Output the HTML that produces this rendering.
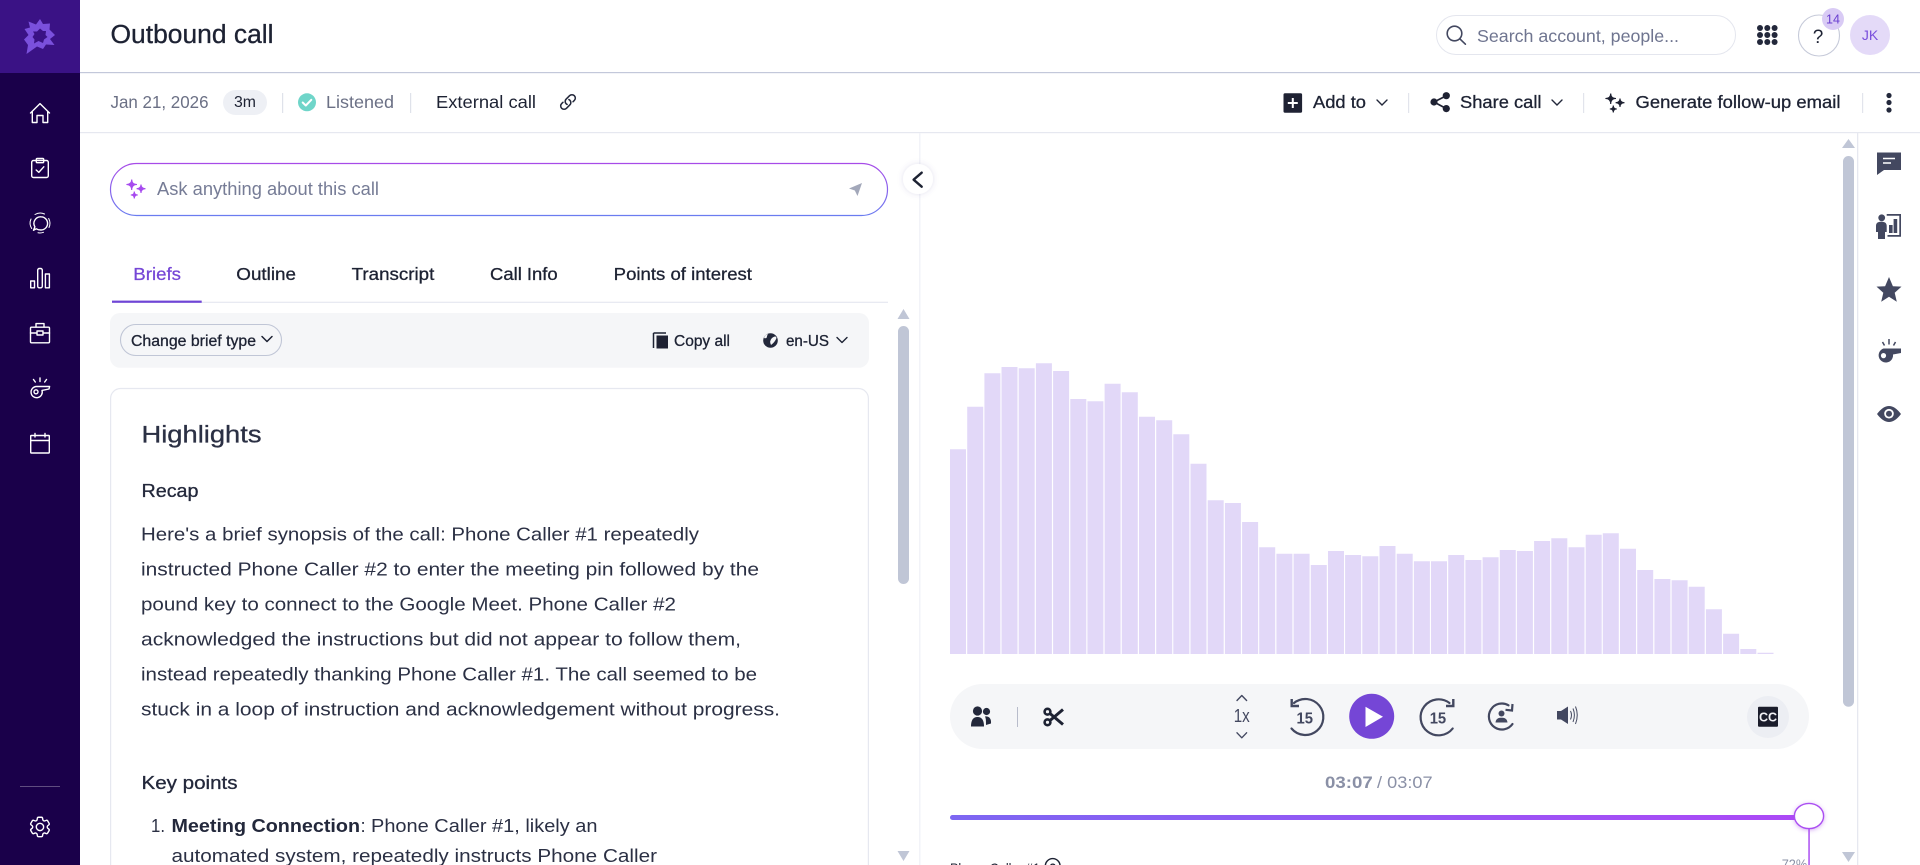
<!DOCTYPE html>
<html lang="en">
<head>
<meta charset="utf-8">
<title>Outbound call</title>
<style>
html,body{margin:0;padding:0;background:#fff;width:1920px;height:865px;overflow:hidden}
svg{display:block}
text{font-family:"Liberation Sans",sans-serif;white-space:pre}
.d{fill:#1d2233}
.dm{fill:#1d2233;stroke:#1d2233;stroke-width:.3}
.b{fill:#2b3044}
.bm{fill:#23283b;stroke:#23283b;stroke-width:.3}
.g{fill:#6b7085}
.ic{fill:none;stroke:#fff;stroke-width:1.4;stroke-linecap:round;stroke-linejoin:round}
.dk{fill:none;stroke:#434860;stroke-width:2.2;stroke-linecap:round;stroke-linejoin:round}
</style>
</head>
<body>
<svg xmlns="http://www.w3.org/2000/svg" width="1920" height="865" viewBox="0 0 1920 865">
<defs>
<linearGradient id="ask" gradientUnits="userSpaceOnUse" x1="0" y1="163" x2="0" y2="216"><stop offset="0" stop-color="#a84be8"/><stop offset="1" stop-color="#6a7cf0"/></linearGradient>
<linearGradient id="prog" gradientUnits="userSpaceOnUse" x1="950" y1="0" x2="1795" y2="0"><stop offset="0" stop-color="#7d66f2"/><stop offset="1" stop-color="#ac49f6"/></linearGradient>
<filter id="sh" x="-50%" y="-50%" width="200%" height="200%"><feDropShadow dx="0" dy="0" stdDeviation="3" flood-color="#5a50a0" flood-opacity=".18"/></filter>
<filter id="sh2" x="-50%" y="-50%" width="200%" height="200%"><feDropShadow dx="0" dy="1" stdDeviation="2" flood-color="#a84be8" flood-opacity=".45"/></filter>
</defs>
<rect width="1920" height="865" fill="#fff"/>

<!-- sidebar -->
<rect x="0" y="0" width="80" height="865" fill="#1a004a"/>
<rect x="0" y="0" width="80" height="73" fill="#3a1285"/>
<path fill="#7a50dc" fill-rule="evenodd" d="M40 19 L43 24 L50 23.5 L49.5 29.5 L55 35 L50 39 L54.5 45 L46 44.5 L43 49 L37 46.5 L26.5 54 L28 45 L24 39.5 L28.5 35 L24.5 29 L30 27.5 L28.5 21.5 L36 24.5 Z M40 28.5 L37 31.5 L33 31.5 L34.5 34 L32.5 37 L34.5 39.5 L34 43.5 L38.5 41 L43 43 L44 39.5 L47.5 37 L45.5 35 L46 31 L43 31 Z"/>

<g class="ic">
<path d="M30.5 113 L40 103.6 L49.5 113 M32.3 111.5 V122.5 H37 V115.5 H43 V122.5 H47.7 V111.5"/>
<rect x="31.7" y="160.5" width="16.6" height="17" rx="1.8"/>
<rect x="36.3" y="158.5" width="7.4" height="4.2" rx="1"/>
<path d="M36.2 170 L38.8 172.4 L43.8 166.8"/>
<g stroke-width="1"><path d="M35 214.5 A10 10 0 0 1 44.5 214 M48.7 218.5 A10 10 0 0 1 49 227.5 M43.5 232.3 A10 10 0 0 1 38 232.8 M31.7 228.5 A10 10 0 0 1 31 219"/></g>
<path d="M41 216.8 A6.6 6.6 0 0 1 41 230 C39 230 37.6 229.6 36.3 228.8 L33.5 230.3 L34.9 226.8 A6.6 6.6 0 0 1 41 216.8 Z"/>
<rect x="30.7" y="281" width="3.8" height="6.8"/><rect x="37.7" y="268.5" width="4.6" height="19.3" rx="1.6"/><rect x="45.4" y="274" width="4" height="13.8"/>
<rect x="30.5" y="327.2" width="19" height="15.6" rx="1"/><path d="M36 327 V323.6 H44 V327 M30.5 333 H37 M43 333 H49.5"/><rect x="37" y="331" width="6" height="4"/>
<path d="M36.5 386.5 H49.6 L49 389 L42 390.4 A5.6 5.6 0 1 1 36.5 386.5 Z"/><circle cx="36" cy="391.8" r="2"/><path d="M40 378 V381.5 M33.5 379.5 L35.3 382 M46.5 379.5 L44.7 382"/>
<rect x="30.7" y="435.5" width="18.6" height="17.5" rx=".5"/><path d="M30.7 440.5 H49.3 M35 433.5 V437 M45 433.5 V437"/>
<g transform="translate(27,814) scale(1.08)" stroke-width="1.3"><path d="M9.594 3.94c.09-.542.56-.94 1.11-.94h2.593c.55 0 1.02.398 1.11.94l.213 1.281c.063.374.313.686.645.87.074.04.147.083.22.127.325.196.72.257 1.075.124l1.217-.456a1.125 1.125 0 0 1 1.37.49l1.296 2.247a1.125 1.125 0 0 1-.26 1.431l-1.003.827c-.293.241-.438.613-.43.992a7.723 7.723 0 0 1 0 .255c-.008.378.137.75.43.991l1.004.827c.424.35.534.955.26 1.43l-1.298 2.247a1.125 1.125 0 0 1-1.369.491l-1.217-.456c-.355-.133-.75-.072-1.076.124a6.47 6.47 0 0 1-.22.128c-.331.183-.581.495-.644.869l-.213 1.281c-.09.543-.56.94-1.11.94h-2.594c-.55 0-1.019-.398-1.11-.94l-.213-1.281c-.062-.374-.312-.686-.644-.87a6.52 6.52 0 0 1-.22-.127c-.325-.196-.72-.257-1.076-.124l-1.217.456a1.125 1.125 0 0 1-1.369-.49l-1.297-2.247a1.125 1.125 0 0 1 .26-1.431l1.004-.827c.292-.24.437-.613.43-.991a6.932 6.932 0 0 1 0-.255c.007-.38-.138-.751-.43-.992l-1.004-.827a1.125 1.125 0 0 1-.26-1.43l1.297-2.247a1.125 1.125 0 0 1 1.37-.491l1.216.456c.356.133.751.072 1.076-.124.072-.044.146-.086.22-.128.332-.183.582-.495.644-.869l.214-1.28Z"/><circle cx="12" cy="12" r="3.4"/></g>
</g>
<rect x="20" y="786" width="40" height="1" fill="#fff" opacity=".3"/>

<!-- header -->
<rect x="80" y="72" width="1840" height="1.2" fill="#c3c8da"/>
<text x="110.5" y="43" font-size="25.5" class="dm" textLength="163" lengthAdjust="spacingAndGlyphs">Outbound call</text>

<rect x="1436.5" y="15.5" width="299" height="39" rx="19.5" fill="#fff" stroke="#e4e6ee"/>
<circle cx="1454.5" cy="33.5" r="7.3" fill="none" stroke="#434860" stroke-width="1.6"/>
<path d="M1459.8 38.8 L1465.4 44.2" stroke="#434860" stroke-width="1.6" stroke-linecap="round"/>
<text x="1477" y="42" font-size="17.5" fill="#6f7590" textLength="202" lengthAdjust="spacingAndGlyphs">Search account, people...</text>
<g fill="#23283b"><circle cx="1760" cy="28" r="3"/><circle cx="1767.3" cy="28" r="3"/><circle cx="1774.6" cy="28" r="3"/><circle cx="1760" cy="35" r="3"/><circle cx="1767.3" cy="35" r="3"/><circle cx="1774.6" cy="35" r="3"/><circle cx="1760" cy="42" r="3"/><circle cx="1767.3" cy="42" r="3"/><circle cx="1774.6" cy="42" r="3"/></g>
<circle cx="1819" cy="35.5" r="20.5" fill="#fff" stroke="#c6cad9" stroke-width="1.1"/>
<text x="1818" y="43" font-size="19" class="d" text-anchor="middle">?</text>
<circle cx="1833" cy="19" r="11" fill="#d9cbf5"/>
<text x="1833" y="23.5" font-size="12.5" fill="#6a3fd0" text-anchor="middle">14</text>
<circle cx="1870" cy="35" r="20" fill="#e4daf8"/>
<text x="1870" y="40" font-size="14" fill="#7a4fdc" text-anchor="middle">JK</text>

<!-- sub header -->
<rect x="80" y="132" width="1840" height="1.2" fill="#e6e8f0"/>
<text x="110.5" y="108" font-size="17.5" class="g" textLength="98" lengthAdjust="spacingAndGlyphs">Jan 21, 2026</text>
<rect x="223" y="90" width="44" height="25" rx="12.5" fill="#eef0f5"/>
<text x="234" y="107" font-size="15.5" class="d" textLength="22" lengthAdjust="spacingAndGlyphs">3m</text>
<rect x="282" y="93" width="1.2" height="20" fill="#dfe2ea"/>
<circle cx="307" cy="102.3" r="9" fill="#6fd5c9"/>
<path d="M302.7 102.5 L305.8 105.5 L311.3 99.8" fill="none" stroke="#fff" stroke-width="2" stroke-linecap="round" stroke-linejoin="round"/>
<text x="326" y="108" font-size="17.5" class="g" textLength="68" lengthAdjust="spacingAndGlyphs">Listened</text>
<rect x="410" y="93" width="1.2" height="20" fill="#dfe2ea"/>
<text x="436" y="108" font-size="17.5" class="d" textLength="100" lengthAdjust="spacingAndGlyphs">External call</text>
<g transform="translate(559,93) scale(.75)" fill="none" stroke="#23283b" stroke-width="2" stroke-linecap="round" stroke-linejoin="round"><path d="M13.19 8.688a4.5 4.5 0 0 1 1.242 7.244l-4.5 4.5a4.5 4.5 0 0 1-6.364-6.364l1.757-1.757m13.35-.622 1.757-1.757a4.5 4.5 0 0 0-6.364-6.364l-4.5 4.5a4.5 4.5 0 0 0 1.242 7.244"/></g>

<rect x="1283.5" y="93.3" width="18.6" height="19.4" rx="1.5" fill="#1f2233"/>
<path d="M1292.8 98 V108 M1287.8 103 H1297.8" stroke="#fff" stroke-width="2"/>
<text x="1313" y="108" font-size="17.5" class="dm" textLength="53" lengthAdjust="spacingAndGlyphs">Add to</text>
<path d="M1377 100 L1382 105 L1387 100" fill="none" stroke="#23283b" stroke-width="1.4" stroke-linecap="round"/>
<rect x="1408" y="93" width="1.2" height="20" fill="#e2e4ec"/>
<g fill="#1f2233"><circle cx="1434" cy="102" r="3.6"/><circle cx="1446.3" cy="95.7" r="3.6"/><circle cx="1446.3" cy="108.6" r="3.6"/><path d="M1434 102 L1446.3 95.7 M1434 102 L1446.3 108.6" stroke="#1f2233" stroke-width="1.7"/></g>
<text x="1460" y="108" font-size="17.5" class="dm" textLength="81.5" lengthAdjust="spacingAndGlyphs">Share call</text>
<path d="M1552 100 L1557 105 L1562 100" fill="none" stroke="#23283b" stroke-width="1.4" stroke-linecap="round"/>
<rect x="1583" y="93" width="1.2" height="20" fill="#e2e4ec"/>
<g transform="translate(1479,-86)" fill="#1f2233"><path d="M131.7 179.5 Q131.7 184.5 137 184.5 Q131.7 184.5 131.7 190 Q131.7 184.5 126.4 184.5 Q131.7 184.5 131.7 179.5 Z" stroke="#1f2233" stroke-width="1.1"/><path d="M141 184.5 Q141 188.7 145.5 188.7 Q141 188.7 141 193 Q141 188.7 136.6 188.7 Q141 188.7 141 184.5 Z" stroke="#1f2233" stroke-width="1.1"/><path d="M134.3 191.5 Q134.3 195 137.8 195 Q134.3 195 134.3 198.5 Q134.3 195 130.8 195 Q134.3 195 134.3 191.5 Z" stroke="#1f2233" stroke-width="1.1"/></g>
<text x="1635.5" y="108" font-size="17.5" class="dm" textLength="205" lengthAdjust="spacingAndGlyphs">Generate follow-up email</text>
<rect x="1862" y="93" width="1.2" height="20" fill="#e2e4ec"/>
<g fill="#23283b"><circle cx="1889" cy="95.5" r="2.6"/><circle cx="1889" cy="102.5" r="2.6"/><circle cx="1889" cy="110" r="2.6"/></g>

<!-- divider between panes -->
<rect x="919" y="133" width="1.5" height="732" fill="#f2f3f8"/>
<rect x="1857" y="133" width="1.3" height="732" fill="#e6e8f0"/>

<!-- ask -->
<rect x="110.5" y="163.5" width="777" height="52" rx="26" fill="#fff" stroke="url(#ask)" stroke-width="1.2"/>
<g fill="#a74bef"><path d="M131.7 179.5 Q131.7 184.5 137 184.5 Q131.7 184.5 131.7 190 Q131.7 184.5 126.4 184.5 Q131.7 184.5 131.7 179.5 Z" stroke="#a74bef" stroke-width="1.1"/><path d="M141 184.5 Q141 188.7 145.5 188.7 Q141 188.7 141 193 Q141 188.7 136.6 188.7 Q141 188.7 141 184.5 Z" stroke="#a74bef" stroke-width="1.1"/><path d="M134.3 191.5 Q134.3 195 137.8 195 Q134.3 195 134.3 198.5 Q134.3 195 130.8 195 Q134.3 195 134.3 191.5 Z" stroke="#a74bef" stroke-width="1.1"/></g>
<text x="157" y="195" font-size="18" fill="#767c96" textLength="222" lengthAdjust="spacingAndGlyphs">Ask anything about this call</text>
<path d="M862 183 L849 188.5 L854.8 190.5 L857.5 196 Z" fill="#a3a8ba"/>
<circle cx="918" cy="179" r="15" fill="#fff" filter="url(#sh)"/>
<path d="M921.7 172.7 L913.6 179.7 L921.7 186.7" fill="none" stroke="#1d2233" stroke-width="2.4" stroke-linecap="round" stroke-linejoin="round"/>

<!-- tabs -->
<text x="133.3" y="280" font-size="17.5" fill="#7546d6" stroke="#7546d6" stroke-width=".25" textLength="47.7" lengthAdjust="spacingAndGlyphs">Briefs</text>
<text x="236.3" y="280" font-size="17.5" class="dm" textLength="59.7" lengthAdjust="spacingAndGlyphs">Outline</text>
<text x="351.7" y="280" font-size="17.5" class="dm" textLength="82.6" lengthAdjust="spacingAndGlyphs">Transcript</text>
<text x="490" y="280" font-size="17.5" class="dm" textLength="67.7" lengthAdjust="spacingAndGlyphs">Call Info</text>
<text x="613.7" y="280" font-size="17.5" class="dm" textLength="138.3" lengthAdjust="spacingAndGlyphs">Points of interest</text>
<rect x="112" y="301.7" width="776" height="1.2" fill="#e6e8f0"/>
<rect x="112" y="300.6" width="89.7" height="2.2" fill="#6f45d6"/>

<!-- toolbar -->
<rect x="110" y="313" width="759" height="54.7" rx="10" fill="#f5f6f8"/>
<rect x="120.5" y="324.5" width="161" height="31" rx="15.5" fill="#f5f6f8" stroke="#c0c6d6" stroke-width="1.1"/>
<text x="131" y="346" font-size="15.5" class="dm" textLength="125" lengthAdjust="spacingAndGlyphs">Change brief type</text>
<path d="M262 336.5 L267 341.5 L272 336.5" fill="none" stroke="#1d2233" stroke-width="1.5" stroke-linecap="round" stroke-linejoin="round"/>
<path d="M653.5 333 V348 M653.5 333 H666" fill="none" stroke="#1d2233" stroke-width="1.5"/>
<rect x="656.5" y="335.5" width="11.5" height="13" fill="#1f2233"/>
<text x="674" y="346" font-size="15.5" class="dm" textLength="56" lengthAdjust="spacingAndGlyphs">Copy all</text>
<circle cx="770.5" cy="340.5" r="7.3" fill="#23283b"/>
<path d="M772 338 Q776 335 776.5 338 Q775 342 771 345 Q769 341 772 338 Z M764 338 Q767 339 767 336 L768 334 Q764.5 335 764 338 Z" fill="#f5f6f8"/>
<text x="786" y="346" font-size="15.5" class="dm" textLength="43" lengthAdjust="spacingAndGlyphs">en-US</text>
<path d="M837 337.5 L842 342.5 L847 337.5" fill="none" stroke="#1d2233" stroke-width="1.4" stroke-linecap="round" stroke-linejoin="round"/>

<!-- card -->
<path d="M110.6 865 V398.5 A10 10 0 0 1 120.6 388.5 H858.4 A10 10 0 0 1 868.4 398.5 V865" fill="#fff" stroke="#e6e8f0" stroke-width="1.2"/>
<text x="141.5" y="442.5" font-size="24" class="b" stroke="#2b3044" stroke-width=".3" textLength="120" lengthAdjust="spacingAndGlyphs">Highlights</text>
<text x="141.5" y="497" font-size="18.5" class="bm" textLength="57" lengthAdjust="spacingAndGlyphs">Recap</text>
<text x="141" y="540.5" font-size="18.5" class="b" textLength="558" lengthAdjust="spacingAndGlyphs">Here's a brief synopsis of the call: Phone Caller #1 repeatedly</text>
<text x="141" y="575.5" font-size="18.5" class="b" textLength="618" lengthAdjust="spacingAndGlyphs">instructed Phone Caller #2 to enter the meeting pin followed by the</text>
<text x="141" y="610.5" font-size="18.5" class="b" textLength="535" lengthAdjust="spacingAndGlyphs">pound key to connect to the Google Meet. Phone Caller #2</text>
<text x="141" y="645.5" font-size="18.5" class="b" textLength="600" lengthAdjust="spacingAndGlyphs">acknowledged the instructions but did not appear to follow them,</text>
<text x="141" y="680.5" font-size="18.5" class="b" textLength="616" lengthAdjust="spacingAndGlyphs">instead repeatedly thanking Phone Caller #1. The call seemed to be</text>
<text x="141" y="715.5" font-size="18.5" class="b" textLength="639" lengthAdjust="spacingAndGlyphs">stuck in a loop of instruction and acknowledgement without progress.</text>
<text x="141.5" y="789" font-size="18.5" class="bm" textLength="96" lengthAdjust="spacingAndGlyphs">Key points</text>
<text x="151" y="832" font-size="18.5" class="b" textLength="14" lengthAdjust="spacingAndGlyphs">1.</text>
<text x="171.5" y="832" font-size="18.5" font-weight="700" fill="#23283b" textLength="188.5" lengthAdjust="spacingAndGlyphs">Meeting Connection</text>
<text x="360.5" y="832" font-size="18.5" class="b">:</text>
<text x="371" y="832" font-size="18.5" class="b" textLength="226.5" lengthAdjust="spacingAndGlyphs">Phone Caller #1, likely an</text>
<text x="171.5" y="862" font-size="18.5" class="b" textLength="485.5" lengthAdjust="spacingAndGlyphs">automated system, repeatedly instructs Phone Caller</text>

<!-- left scrollbar -->
<path d="M903.5 309 L909.5 319 H897.5 Z" fill="#c0c6d6"/>
<rect x="898" y="326" width="11" height="258" rx="5.5" fill="#c0c6d6"/>
<path d="M903.5 861 L897.5 851 H909.5 Z" fill="#c0c6d6"/>

<!-- bars -->
<path fill="#e2d8f8" d="M950 654V449.3h16V654zM967.2 654V406.7h16V654zM984.4 654V373.3h16V654zM1001.5 654V367h16V654zM1018.7 654V368.3h16V654zM1035.9 654V363.3h16V654zM1053.1 654V371h16V654zM1070.3 654V399h16V654zM1087.4 654V401.3h16V654zM1104.6 654V383.7h16V654zM1121.8 654V392.3h16V654zM1139 654V416.7h16V654zM1156.2 654V420.3h16V654zM1173.3 654V434.3h16V654zM1190.5 654V463.7h16V654zM1207.7 654V500.3h16V654zM1224.9 654V503h16V654zM1242.1 654V522h16V654zM1259.2 654V547.3h16V654zM1276.4 654V553.7h16V654zM1293.6 654V553.7h16V654zM1310.8 654V565h16V654zM1328 654V551h16V654zM1345.1 654V555h16V654zM1362.3 654V556.3h16V654zM1379.5 654V546h16V654zM1396.7 654V553.7h16V654zM1413.9 654V561.3h16V654zM1431 654V561.3h16V654zM1448.2 654V555h16V654zM1465.4 654V560h16V654zM1482.6 654V557.3h16V654zM1499.8 654V550h16V654zM1516.9 654V551h16V654zM1534.1 654V541h16V654zM1551.3 654V538.3h16V654zM1568.5 654V547.3h16V654zM1585.7 654V534.7h16V654zM1602.8 654V533.3h16V654zM1620 654V548.7h16V654zM1637.2 654V570h16V654zM1654.4 654V579h16V654zM1671.6 654V580.3h16V654zM1688.7 654V586.7h16V654zM1705.9 654V609.3h16V654zM1723.1 654V633.7h16V654zM1740.3 654V649h16V654zM1757.5 654V652.7h16V654z"/>

<!-- player -->
<rect x="950" y="684" width="859" height="65" rx="32.5" fill="#f5f6f8"/>
<g fill="#23283b">
<circle cx="977.5" cy="711" r="4.6"/><path d="M971 726.5 C971 719 974 717 977.5 717 C981 717 984 719 984 726.5 Z"/>
<circle cx="986.5" cy="711.5" r="3.6"/><path d="M985 716.5 C989 716 991.5 718.5 991 723.5 L986 725 C986 721 986 718.5 985 716.5 Z"/>
</g>
<rect x="1017" y="707" width="1" height="20" fill="#b8bccb"/>
<g fill="none" stroke="#1d2233"><circle cx="1047.5" cy="711.7" r="2.9" stroke-width="2.6"/><circle cx="1047.5" cy="722.3" r="2.9" stroke-width="2.6"/><path d="M1050 713.5 L1063 724.5 M1050 720.5 L1063 709.5" stroke-width="3"/></g>
<path d="M1237 700.5 L1241.8 695.5 L1246.6 700.5" fill="none" stroke="#434860" stroke-width="1.4" stroke-linecap="round" stroke-linejoin="round"/>
<text x="1233.7" y="722" font-size="18.5" fill="#434860" textLength="16" lengthAdjust="spacingAndGlyphs">1x</text>
<path d="M1237 732.8 L1241.8 737.8 L1246.6 732.8" fill="none" stroke="#434860" stroke-width="1.4" stroke-linecap="round" stroke-linejoin="round"/>
<path class="dk" d="M1294 703 A18 18 0 1 1 1291.5 728.5"/>
<path d="M1291.7 699 V706 H1299" fill="none" stroke="#434860" stroke-width="2.4"/>
<text x="1296.5" y="723.3" font-size="15.5" font-weight="700" fill="#434860" textLength="16.5" lengthAdjust="spacingAndGlyphs">15</text>
<circle cx="1371.7" cy="716.3" r="22.5" fill="#7546d6"/>
<path d="M1365.5 706.8 L1383 716.8 L1365.5 727 Z" fill="#fff"/>
<path class="dk" d="M1449.5 703 A18 18 0 1 0 1452.7 728.5"/>
<path d="M1453.3 699 V706 H1446" fill="none" stroke="#434860" stroke-width="2.4"/>
<text x="1429.7" y="723.3" font-size="15.5" font-weight="700" fill="#434860" textLength="16.5" lengthAdjust="spacingAndGlyphs">15</text>
<path class="dk" d="M1508.5 705.3 A13 13 0 1 0 1512.5 724"/>
<path d="M1512.5 704 L1512 710.5 L1505.5 709.8" fill="none" stroke="#434860" stroke-width="2.2"/>
<circle cx="1501.5" cy="713.5" r="3" fill="#434860"/>
<path d="M1495.5 722.5 C1496 718.5 1498.5 717.8 1501.5 717.8 C1504.5 717.8 1507 718.5 1507.5 722.5 Z" fill="#434860"/>
<path d="M1557 711 H1561 L1568 706.5 V724 L1561 719.5 H1557 Z" fill="#434860"/>
<path d="M1570.5 711 Q1572.5 715 1570.5 719.5 M1573 708.5 Q1575.8 715 1573 722 M1575.5 706.5 Q1579 715 1575.5 724" fill="none" stroke="#434860" stroke-width="1"/>
<circle cx="1768" cy="717" r="21" fill="#eceef3"/>
<rect x="1758" y="706.8" width="20" height="20" rx="1" fill="#1a1c2b"/>
<text x="1768" y="721.5" font-size="12.5" font-weight="700" fill="#f2f2f6" text-anchor="middle">CC</text>

<!-- time and progress -->
<text x="1325" y="788" font-size="17" font-weight="700" fill="#8a90a6" textLength="47.7" lengthAdjust="spacingAndGlyphs">03:07</text>
<text x="1377" y="788" font-size="17" fill="#8a90a6" textLength="55.6" lengthAdjust="spacingAndGlyphs">/ 03:07</text>
<rect x="950" y="815" width="850" height="5" rx="2.5" fill="url(#prog)"/>
<rect x="1808.3" y="828" width="1.5" height="37" fill="#ab4ff2"/>
<ellipse cx="1809" cy="816" rx="14.6" ry="12.6" fill="#fff" stroke="#ab4ff2" stroke-width="1.4" filter="url(#sh2)"/>
<text x="1781.7" y="869" font-size="13.5" fill="#8a90a6" textLength="25.5" lengthAdjust="spacingAndGlyphs">72%</text>
<text x="950" y="873" font-size="14" class="d" textLength="90" lengthAdjust="spacingAndGlyphs">Phone Caller #1</text>
<circle cx="1052.7" cy="866" r="7.4" fill="none" stroke="#1d2233" stroke-width="1.4"/>
<text x="1052.7" y="871" font-size="11" font-weight="700" class="d" text-anchor="middle">?</text>

<!-- right scrollbar -->
<path d="M1848.5 139 L1855 148 H1842 Z" fill="#c0c6d6"/>
<rect x="1843" y="156" width="11" height="550.7" rx="5.5" fill="#c0c6d6"/>
<path d="M1848.5 862 L1842 852 H1855 Z" fill="#c0c6d6"/>

<!-- right rail -->
<g fill="#434860">
<path d="M1877 152.5 H1901 V170 H1884 L1877 175 Z"/>
<path d="M1876 226 C1876 222.8 1878 221.8 1881.3 221.8 C1884.6 221.8 1886.7 222.8 1886.7 226 V232 H1885 V239 H1878 V232 H1876 Z"/>
<circle cx="1881.7" cy="217.8" r="3.4"/>
<path fill-rule="evenodd" d="M1886.7 214 H1901 V236.7 H1887.5 V235 H1899.3 V215.7 H1886.7 Z"/>
<rect x="1889" y="225" width="3.6" height="8"/><rect x="1893.6" y="219" width="3.6" height="14"/>
<path d="M1889 277 L1892.9 286.2 L1901.5 286.6 L1894.7 292.8 L1896.8 301.7 L1889 296.8 L1881.2 301.7 L1883.3 292.8 L1876.5 286.6 L1885.1 286.2 Z"/>
<path fill-rule="evenodd" d="M1883.5 348.5 H1901 V353 L1893 354.5 A7.2 7.2 0 1 1 1883.5 348.5 Z M1883.5 353 A2.6 2.6 0 1 0 1883.5 358.2 A2.6 2.6 0 1 0 1883.5 353 Z"/>
<path d="M1877 414 Q1889 398 1901 414 Q1889 430 1877 414 Z"/>
</g>
<path d="M1883 158.5 H1895 M1883 163 H1891" stroke="#fff" stroke-width="1.6"/>
<path d="M1889 339 V344.5 M1882.5 342 L1884.5 345.5 M1895.5 342 L1893.5 345.5" stroke="#434860" stroke-width="1.5"/>
<circle cx="1889" cy="413.7" r="4.8" fill="#fff"/><circle cx="1889" cy="413.7" r="3" fill="#434860"/>
</svg>
</body>
</html>
